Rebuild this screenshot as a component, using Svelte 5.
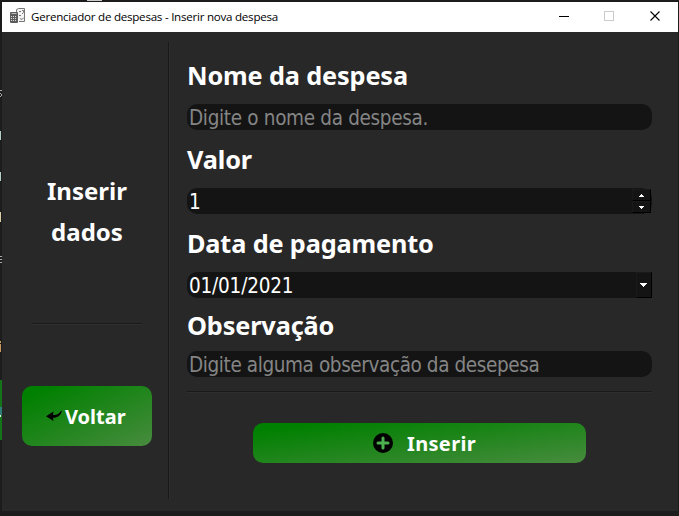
<script>
  const fields = [
    { label: 'Nome da despesa', kind: 'text', placeholder: 'Digite o nome da despesa.' },
    { label: 'Valor', kind: 'number', value: '1' },
    { label: 'Data de pagamento', kind: 'date', value: '01/01/2021' },
    { label: 'Observação', kind: 'text', placeholder: 'Digite alguma observação da desepesa' }
  ];
</script>

<div class="desktop">
  <div class="tab"></div>
  <!-- slivers of the window behind, visible along the left edge -->
  <svg class="behind" width="2" height="516" viewBox="0 0 2 516" shape-rendering="crispEdges">
    <path d="M0 90h2v1H0ZM0 93h1v1H0ZM1 94h1v2H1ZM0 96h1v1H0Z" fill="#aaa" />
    <path d="M0 131h1v9H0ZM0 172h1v9H0Z" fill="#b5cfca" />
    <path d="M0 212h1v10H0Z" fill="#d8d0a4" />
    <path d="M0 256h2v1H0ZM0 259h2v1H0ZM0 262h2v1H0Z" fill="#aaa" />
    <path d="M0 341h1v2H0ZM0 344h1v8H0Z" fill="#c89a62" />
    <path d="M0 380h2v60H0Z" fill="#14741a" />
    <path d="M0 407h2v8H0Z" fill="#2f7d78" />
    <path d="M0 415h1v2H0Z" fill="#eee" />
  </svg>
  <div class="window">
    <header>
      <svg class="appicon" width="16" height="16" viewBox="0 0 16 16">
        <path d="M6.500 4V1.500L8.500 .5H14.500V13.500H9" fill="#f3f3f3" stroke="#777" />
        <path d="M9 3.500h2M12 2.500h1.500v2L12 6M9 7.500h2M10 10.500l2 1 2-2" fill="none" stroke="#777" />
        <rect x="0" y="4" width="8" height="11" rx="1" fill="#5c5c5c" />
        <path d="M1.500 5.500h5" stroke="#bbb" />
        <path d="M1 8.500h6M1 10.500h6M1 12.500h6" stroke="#ddd" stroke-dasharray="1 1" />
      </svg>
      <span class="title">Gerenciador de despesas - Inserir nova despesa</span>
      <svg class="controls" width="104" height="12" viewBox="0 0 104 12" fill="none">
        <path d="M0 6.500h10" stroke="#000" />
        <rect x="45.500" y="1.500" width="9" height="9" stroke="#ccc" />
        <path d="M91.500 1.500l9 9M100.500 1.500l-9 9" stroke="#000" stroke-width="1.1" />
      </svg>
    </header>
    <main>
      <aside>
        <h1><span>Inserir</span><span>dados</span></h1>
        <div class="rule"></div>
        <button class="back">
          <svg width="17" height="12" viewBox="0 0 17 12">
            <path d="M0 6.300L7.500 1.500L7 4.900C10 5.300 13.500 4 15 .8L15.800 1C14.800 5.500 11.500 8 7 7.800L7.500 11Z" fill="#000" />
          </svg>
          <span>Voltar</span>
        </button>
      </aside>
      <div class="divider"></div>
      <section>
        {#each fields as f, i}
          <div class="field f{i}">
            <div class="label"><span>{f.label}</span></div>
            <div class="input {f.kind}">
              <span class="value" class:hint={f.placeholder}>{f.placeholder ?? f.value}</span>
              {#if f.kind === 'number'}
                <div class="spin">
                  <b><svg width="5" height="3" viewBox="0 0 5 3"><path d="M2 0h1v1h1v1h1v1H0V2h1V1h1Z" fill="#fff" /></svg></b>
                  <b><svg width="5" height="3" viewBox="0 0 5 3"><path d="M0 0h5v1H4v1H3v1H2V2H1V1H0Z" fill="#fff" /></svg></b>
                </div>
              {:else if f.kind === 'date'}
                <b class="drop"><svg width="7" height="4" viewBox="0 0 7 4"><path d="M0 0h7v1H6v1H5v1H4v1H3V3H2V2H1V1H0Z" fill="#fff" /></svg></b>
              {/if}
            </div>
          </div>
        {/each}
        <div class="rule"></div>
        <button class="insert">
          <svg width="20" height="20" viewBox="0 0 20 20">
            <circle cx="10" cy="10" r="10" fill="#000" />
            <path d="M10 5v10M5 10h10" stroke="#4caf50" stroke-width="3" stroke-linecap="round" />
          </svg>
          <span>Inserir</span>
        </button>
      </section>
    </main>
  </div>
</div>

<style>
  :global(body) { margin: 0; background: #1e1e1e; }
  .desktop {
    position: relative;
    box-sizing: border-box;
    width: 679px;
    height: 516px;
    padding: 2px 1px 5px 2px;
    background: #1d1c1d;
    overflow: hidden;
    font-family: "Noto Sans", sans-serif;
    color: #fff;
  }
  .tab { position: absolute; left: 87px; top: 0; width: 15px; height: 1px; background: #ccc; }
  .behind { position: absolute; left: 0; top: 0; }
  .window { height: 509px; display: flex; flex-direction: column; background: #282828; }
  header { height: 30px; display: flex; align-items: center; background: #fff; color: #000; }
  .appicon { margin: 0 5px 2px 8px; }
  .title { font: 11.6px/16px "Open Sans", sans-serif; letter-spacing: -0.25px; white-space: nowrap; }
  .controls { margin: 0 15px 2px auto; }
  main { flex: 1; display: flex; }
  aside { width: 166px; display: flex; flex-direction: column; }
  h1 {
    margin: 138px 0 0 4px; font-size: 24px; line-height: 41px; font-weight: 700;
    display: flex; flex-direction: column; align-items: center;
  }
  .rule { height: 1px; background: #1a1a1a; border-bottom: 1px solid #2f2f2f; }
  aside .rule { margin: 71px 26px 0 30px; }
  button {
    border: 0; padding: 0; border-radius: 10px; display: flex; align-items: center;
    font: 700 20px/26px "Noto Sans", sans-serif; color: #fff;
    background: linear-gradient(to bottom right, #008000 10%, #458b3c 97%);
  }
  button span { position: relative; top: 1px; }
  .back { width: 130px; height: 60px; margin: 61px 0 0 20px; }
  .back svg { margin: 0 2px 0 24px; }
  .divider { width: 1px; height: 457px; margin-top: 10px; background: #181818; border-right: 1px solid #2f2f2f; }
  section { width: 465px; margin-left: 17px; display: flex; flex-direction: column; }
  .field { display: flex; flex-direction: column; }
  .label {
    height: 34px; margin-bottom: 12px; font-size: 25.3px; line-height: 34px; font-weight: 700;
    letter-spacing: -0.15px; white-space: nowrap;
  }
  .f0 { margin-top: 26px; }
  .f1, .f2 { margin-top: 12px; }
  .f3 { margin-top: 10px; }
  .f3 .label { margin-bottom: 9px; }
  .input {
    height: 26px; border-radius: 10px; background: #141414; display: flex; align-items: center;
    justify-content: space-between; padding-left: 2px; white-space: nowrap;
    font: 20.5px/26px "DejaVu Sans Condensed", "DejaVu Sans", sans-serif; font-stretch: condensed; letter-spacing: -0.33px;
  }
  .input.date { border-radius: 10px 0 0 10px; letter-spacing: -0.2px; }
  .f3 .input { letter-spacing: -0.4px; }
  .value { padding-top: 2px; line-height: 24px; }
  .hint { color: #858585; }
  .spin { width: 19px; height: 24px; margin-right: 1px; display: flex; flex-direction: column; }
  b {
    box-sizing: border-box; height: 12px; display: flex; align-items: center; justify-content: center;
    background: #141414; border: 1px solid #1a1a1a; border-right: 1px solid #000; border-bottom: 1px solid #000;
  }
  .drop { width: 16px; height: 26px; padding-right: 1px; }
  section > .rule { margin-top: 14px; }
  .insert { width: 333px; height: 40px; margin: 30px 0 0 66px; letter-spacing: 0.35px; }
  .insert svg { margin: 0 14px 0 120px; }
</style>
